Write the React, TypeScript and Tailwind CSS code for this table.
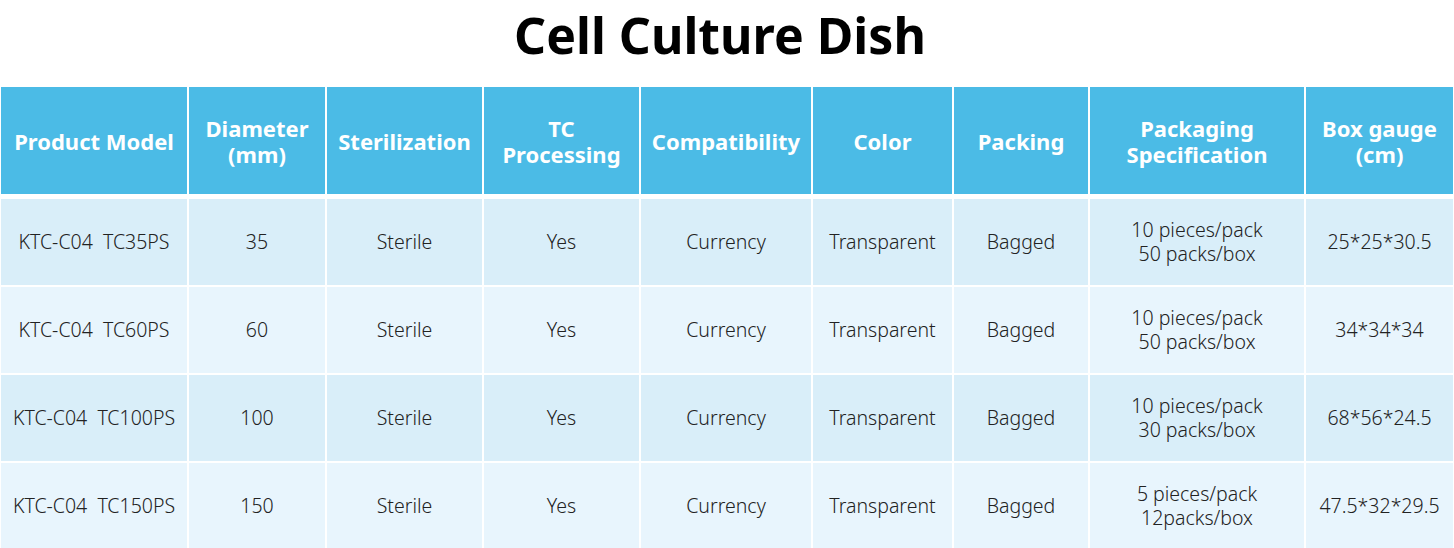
const headers = [
  "Product Model",
  "Diameter\n(mm)",
  "Sterilization",
  "TC\nProcessing",
  "Compatibility",
  "Color",
  "Packing",
  "Packaging\nSpecification",
  "Box gauge\n(cm)",
];

const rows = [
  ["KTC-C04\u00a0 TC35PS", "35", "Sterile", "Yes", "Currency", "Transparent", "Bagged", "10 pieces/pack\n50 packs/box", "25*25*30.5"],
  ["KTC-C04\u00a0 TC60PS", "60", "Sterile", "Yes", "Currency", "Transparent", "Bagged", "10 pieces/pack\n50 packs/box", "34*34*34"],
  ["KTC-C04\u00a0 TC100PS", "100", "Sterile", "Yes", "Currency", "Transparent", "Bagged", "10 pieces/pack\n30 packs/box", "68*56*24.5"],
  ["KTC-C04\u00a0 TC150PS", "150", "Sterile", "Yes", "Currency", "Transparent", "Bagged", "5 pieces/pack\n12packs/box", "47.5*32*29.5"],
];

const cols = "grid grid-cols-[186px_136px_155px_155px_170px_139px_134px_214px_147px] gap-x-[2px]";

export default function App() {
  return (
    <div className="w-[1454px] h-[548px] overflow-hidden bg-white font-['Noto_Sans','Open_Sans',sans-serif]">
      <h1 className="h-[87px] pt-[2px] pr-[14px] text-center text-[50px] font-bold leading-[66px] text-black">
        Cell Culture Dish
      </h1>

      <div className="pl-px">
        {/* Header */}
        <div className={`${cols} h-[107px]`}>
          {headers.map((h) => (
            <div
              key={h}
              className="flex items-center justify-center whitespace-pre-line bg-[#4bbbe6] text-center text-[22px] font-bold leading-[26px] text-white"
            >
              {h}
            </div>
          ))}
        </div>

        {/* Body */}
        <div className="mt-[5px] flex flex-col gap-y-[2px]">
          {rows.map((r, i) => (
            <div key={r[0]} className={`${cols} h-[86px]`}>
              {r.map((c, j) => (
                <div
                  key={j}
                  className={`flex items-center justify-center whitespace-pre-line text-center text-[19.5px] font-light leading-[24px] text-[#222] ${
                    i % 2 === 0 ? "bg-[#d9eef9]" : "bg-[#e8f5fd]"
                  }`}
                >
                  {c}
                </div>
              ))}
            </div>
          ))}
        </div>
      </div>
    </div>
  );
}
